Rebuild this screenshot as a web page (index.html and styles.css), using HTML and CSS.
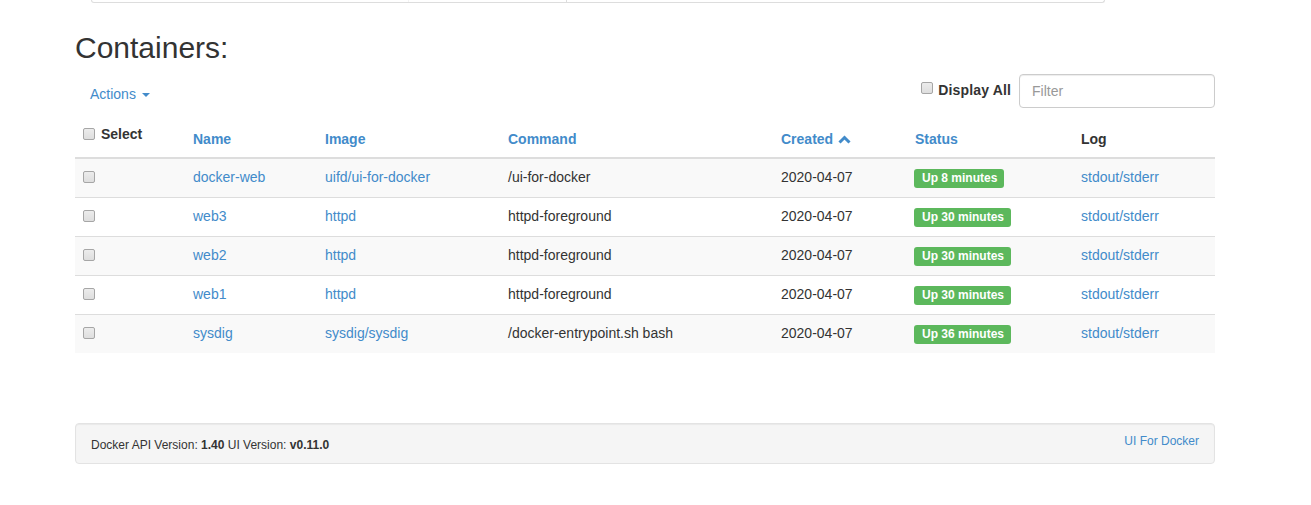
FILE: index.html
```html
<!DOCTYPE html>
<html>
<head>
<meta charset="utf-8">
<title>Containers</title>
<link rel="stylesheet" href="styles.css">
</head>
<body>
<div class="page">
  <div class="topbox">
    <div class="tb-cell tb-a"></div>
    <div class="tb-cell tb-b"></div>
    <div class="tb-cell tb-c"></div>
  </div>

  <h2 class="title">Containers:</h2>

  <div class="toolbar">
    <a class="actions" href="#">Actions <span class="caret"></span></a>
    <div class="tools-right">
      <label class="display-all"><input type="checkbox" class="cb">Display All</label>
      <input class="filter" type="text" placeholder="Filter">
    </div>
  </div>

  <table class="ctable">
    <colgroup>
      <col class="w-select"><col class="w-name"><col class="w-image"><col class="w-command"><col class="w-created"><col class="w-status"><col class="w-log">
    </colgroup>
    <thead>
      <tr>
        <th class="th-select"><label><input type="checkbox" class="cb">Select</label></th>
        <th><a href="#">Name</a></th>
        <th><a href="#">Image</a></th>
        <th><a href="#">Command</a></th>
        <th><a href="#">Created <svg class="chev" width="13" height="9" viewBox="0 0 13 9"><path d="M1.5 7.5 L6.5 2.5 L11.5 7.5" fill="none" stroke="#428bca" stroke-width="3"/></svg></a></th>
        <th><a href="#">Status</a></th>
        <th>Log</th>
      </tr>
    </thead>
    <tbody>
      <tr>
        <td><input type="checkbox" class="cb"></td>
        <td><a href="#">docker-web</a></td>
        <td><a href="#">uifd/ui-for-docker</a></td>
        <td>/ui-for-docker</td>
        <td>2020-04-07</td>
        <td><span class="label">Up 8 minutes</span></td>
        <td><a href="#">stdout/stderr</a></td>
      </tr>
      <tr>
        <td><input type="checkbox" class="cb"></td>
        <td><a href="#">web3</a></td>
        <td><a href="#">httpd</a></td>
        <td>httpd-foreground</td>
        <td>2020-04-07</td>
        <td><span class="label">Up 30 minutes</span></td>
        <td><a href="#">stdout/stderr</a></td>
      </tr>
      <tr>
        <td><input type="checkbox" class="cb"></td>
        <td><a href="#">web2</a></td>
        <td><a href="#">httpd</a></td>
        <td>httpd-foreground</td>
        <td>2020-04-07</td>
        <td><span class="label">Up 30 minutes</span></td>
        <td><a href="#">stdout/stderr</a></td>
      </tr>
      <tr>
        <td><input type="checkbox" class="cb"></td>
        <td><a href="#">web1</a></td>
        <td><a href="#">httpd</a></td>
        <td>httpd-foreground</td>
        <td>2020-04-07</td>
        <td><span class="label">Up 30 minutes</span></td>
        <td><a href="#">stdout/stderr</a></td>
      </tr>
      <tr>
        <td><input type="checkbox" class="cb"></td>
        <td><a href="#">sysdig</a></td>
        <td><a href="#">sysdig/sysdig</a></td>
        <td>/docker-entrypoint.sh bash</td>
        <td>2020-04-07</td>
        <td><span class="label">Up 36 minutes</span></td>
        <td><a href="#">stdout/stderr</a></td>
      </tr>
    </tbody>
  </table>

  <div class="well">
    <div class="well-left">Docker API Version: <strong>1.40</strong> UI Version: <strong>v0.11.0</strong></div>
    <a class="well-right" href="#">UI For Docker</a>
  </div>
</div>
</body>
</html>
```

FILE: styles.css
```css
* { box-sizing: border-box; }

html, body {
  margin: 0;
  padding: 0;
  background: #fff;
}

body {
  font-family: "Liberation Sans", Arial, Helvetica, sans-serif;
  font-size: 14px;
  line-height: 20px;
  color: #333;
}

a {
  color: #428bca;
  text-decoration: none;
}

.page {
  width: 1140px;
  margin-left: 75px;
}

.topbox {
  display: flex;
  margin: 0 110px 0 16px;
  height: 3px;
  border: 1px solid #ddd;
  border-top: 0;
  border-radius: 0 0 3px 3px;
}

.tb-cell { height: 2px; }
.tb-a { width: 317px; border-right: 1px solid #f3f3f3; }
.tb-b { width: 158px; border-right: 1px solid #ddd; }
.tb-c { flex: 1; }

.title {
  margin: 28px 0 0;
  font-size: 30px;
  line-height: 33px;
  font-weight: normal;
  color: #333;
}

.toolbar {
  display: flex;
  justify-content: space-between;
  align-items: flex-start;
  margin-top: 10px;
  height: 34px;
}

.actions {
  display: block;
  padding: 10px 15px 0;
  line-height: 20px;
}

.caret {
  display: inline-block;
  width: 0;
  height: 0;
  margin-left: 2px;
  vertical-align: middle;
  border-top: 4px solid #428bca;
  border-left: 4px solid transparent;
  border-right: 4px solid transparent;
}

.tools-right {
  display: flex;
  align-items: flex-start;
}

.display-all {
  display: block;
  margin-top: 6px;
  margin-right: 8px;
  font-weight: bold;
  line-height: 20px;
  letter-spacing: 0.15px;
  color: #333;
}

.cb {
  -webkit-appearance: none;
  appearance: none;
  display: inline-block;
  width: 12px;
  height: 12px;
  margin: 0;
  border: 1px solid #a6a6a6;
  border-radius: 2px;
  background: linear-gradient(#ececec, #dedede);
  vertical-align: -1px;
}

.display-all .cb {
  margin-right: 5px;
  vertical-align: 1px;
}

.filter {
  width: 196px;
  height: 34px;
  padding: 6px 12px;
  font-family: "Liberation Sans", Arial, Helvetica, sans-serif;
  font-size: 14px;
  line-height: 20px;
  color: #555;
  border: 1px solid #ccc;
  border-radius: 4px;
  box-shadow: inset 0 1px 1px rgba(0,0,0,0.075);
  outline: none;
}

.filter::placeholder { color: #999; }

.ctable {
  width: 1140px;
  margin-top: 13px;
  border-collapse: collapse;
  border-spacing: 0;
  table-layout: fixed;
}

.w-select { width: 110px; }
.w-name { width: 132px; }
.w-image { width: 183px; }
.w-command { width: 273px; }
.w-created { width: 134px; }
.w-status { width: 166px; }
.w-log { width: 142px; }

.ctable th {
  padding: 8px;
  text-align: left;
  vertical-align: bottom;
  font-weight: bold;
  line-height: 20px;
  border-bottom: 2px solid #ddd;
}

.ctable th.th-select {
  vertical-align: top;
  padding-top: 3px;
}

.th-select .cb { margin-right: 6px; }

.chev {
  display: inline-block;
  vertical-align: 0;
  margin-left: 1px;
}

.ctable td {
  padding: 8px 8px 10px;
  line-height: 20px;
  vertical-align: top;
  border-top: 1px solid #ddd;
  white-space: nowrap;
}

.ctable tbody tr:nth-child(odd) td { background: #f9f9f9; }

.label {
  display: inline-block;
  height: 19px;
  padding: 0 7px 0 8px;
  margin: 2px 0 -2px -1px;
  vertical-align: top;
  font-size: 12px;
  line-height: 19px;
  font-weight: bold;
  color: #fff;
  background: #5cb85c;
  border-radius: 3px;
}

.well {
  display: flex;
  justify-content: space-between;
  align-items: flex-start;
  height: 41px;
  margin-top: 70px;
  padding: 0 15px;
  background: #f5f5f5;
  border: 1px solid #e3e3e3;
  border-radius: 4px;
  box-shadow: inset 0 1px 1px rgba(0,0,0,0.05);
  font-size: 12px;
  line-height: 17px;
}

.well-left { margin-top: 13px; color: #333; }
.well-right { margin-top: 9px; }
```
